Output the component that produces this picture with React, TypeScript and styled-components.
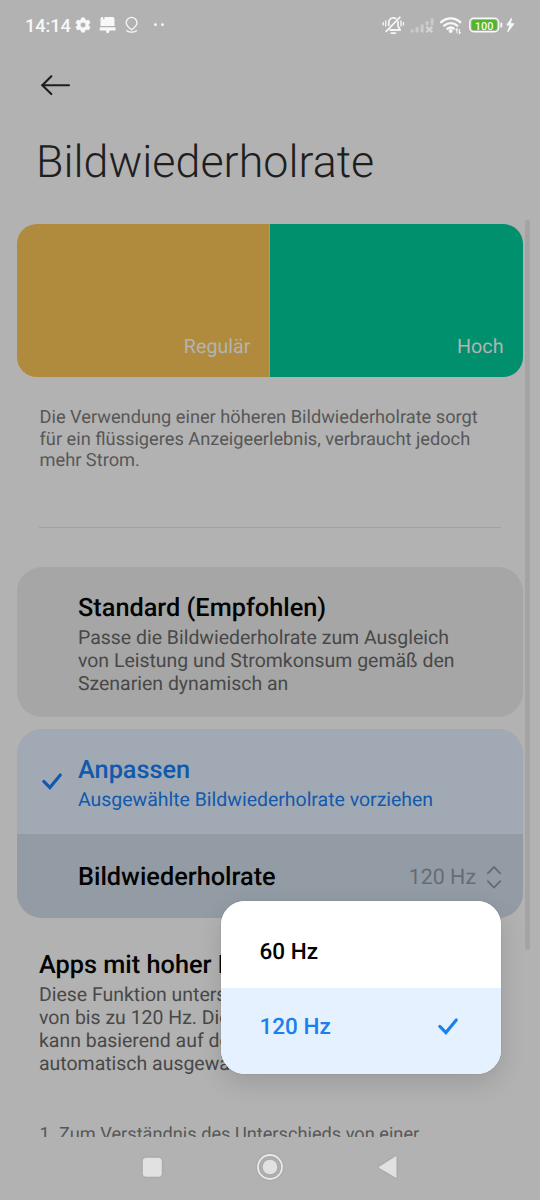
import React from "react";
import styled, { createGlobalStyle } from "styled-components";

const Global = createGlobalStyle`
  * { box-sizing: border-box; }
  body { margin: 0; background: #b2b2b2; font-family: Roboto, "Liberation Sans", sans-serif; text-rendering: geometricPrecision; }
  h1, h2, p { margin: 0; }
  svg { display: block; flex: none; }
`;

const Screen = styled.main`
  position: relative;
  width: 540px;
  height: 1200px;
  overflow: hidden;
  display: flex;
  flex-direction: column;
  background: #b2b2b2;
`;

const StatusBar = styled.header`
  height: 50px;
  padding: 0 24px 0 25px;
  display: flex;
  justify-content: space-between;
  align-items: center;
  flex: none;
`;

const Clock = styled.span`
  width: 46px;
  font-size: 18.2px;
  font-weight: 500;
  line-height: 22px;
  padding-top: 3px;
  letter-spacing: -0.1px;
  color: #f8f8f8;
  white-space: nowrap;
`;

const StatusGroup = styled.div`
  display: flex;
  align-items: center;
`;

const Toolbar = styled.div`
  height: 70px;
  padding: 25px 0 0 40px;
  flex: none;
`;

const Title = styled.h1`
  height: 104px;
  padding: 13px 0 0 36px;
  font-size: 44.8px;
  font-weight: 300;
  line-height: 58px;
  color: #1e1e1e;
  white-space: nowrap;
  flex: none;
`;

const Content = styled.section`
  height: 913px;
  overflow: hidden;
  display: flex;
  flex-direction: column;
  padding: 0 17px;
  flex: none;
`;

const Preview = styled.div`
  height: 153px;
  display: grid;
  grid-template-columns: 253px 253px;
  border-radius: 20px;
  overflow: hidden;
  flex: none;
`;

const PreviewHalf = styled.div<{ $color: string }>`
  display: flex;
  justify-content: flex-end;
  align-items: flex-end;
  padding: 0 19.5px 18.5px 0;
  font-size: 19.7px;
  line-height: 24px;
  color: #b3b3b3;
  background: ${(p) => p.$color};
  &:first-child {
    border-right: 1px solid #afa160;
    padding-right: 18.5px;
  }
`;

const Intro = styled.p`
  height: 150px;
  padding: 30.4px 0 0 22.5px;
  font-size: 18.23px;
  line-height: 21.4px;
  color: #575757;
  white-space: pre-line;
  flex: none;
`;

const Divider = styled.hr`
  width: 462px;
  height: 1px;
  margin: 0 0 39px 22px;
  border: 0;
  background: #a1a1a1;
  flex: none;
`;

const Card = styled.article<{ $height: number }>`
  height: ${(p) => p.$height}px;
  border-radius: 25px;
  background: #a6a6a6;
  overflow: hidden;
  margin-bottom: 12px;
  flex: none;
`;

const Option = styled.div<{ $active?: boolean; $height: number }>`
  display: grid;
  grid-template-columns: 61px 1fr;
  height: ${(p) => p.$height}px;
  padding-top: 27px;
  background: ${(p) => (p.$active ? "#a1aab4" : "#a6a6a6")};
  color: ${(p) => (p.$active ? "#1059ad" : "#484848")};
`;

const Mark = styled.div`
  padding: 15.5px 0 0 24px;
`;

const Heading = styled.h2<{ $color?: string }>`
  font-size: 25.3px;
  font-weight: 500;
  line-height: 30px;
  color: ${(p) => p.$color ?? "#030303"};
  white-space: nowrap;
`;

const Description = styled.p`
  font-size: 19.47px;
  line-height: 23px;
  padding-top: 2px;
  color: inherit;
  white-space: pre-line;
`;

const RateRow = styled.div`
  height: 84px;
  padding: 4px 21px 0 61px;
  display: flex;
  align-items: center;
  background: #939ca5;
`;

const RateValue = styled.span`
  margin-left: auto;
  padding-right: 10px;
  font-size: 21.4px;
  line-height: 26px;
  color: #676c72;
`;

const Apps = styled.div`
  padding: 21px 0 0 22px;
  width: 500px;
  color: #484848;
  flex: none;
`;

const Footnote = styled.p`
  padding: 48.5px 0 0 22.5px;
  font-size: 18.2px;
  line-height: 21.4px;
  color: #575757;
  white-space: nowrap;
  flex: none;
`;

const ScrollThumb = styled.div`
  position: absolute;
  left: 524.5px;
  top: 220px;
  width: 5.5px;
  height: 730px;
  border-radius: 3px;
  background: #a4a4a4;
`;

const Popup = styled.div`
  position: absolute;
  left: 220.5px;
  top: 901px;
  width: 280.5px;
  height: 173px;
  border-radius: 24px;
  overflow: hidden;
  background: #fff;
  box-shadow: 0 9px 26px rgba(0, 0, 0, 0.13), 0 0 2px rgba(0, 0, 0, 0.12);
`;

const PopupItem = styled.div<{ $selected?: boolean }>`
  height: 86.5px;
  display: flex;
  align-items: center;
  justify-content: space-between;
  padding: ${(p) => (p.$selected ? "0 42px 8px 39px" : "15px 42px 0 39px")};
  font-size: 22.5px;
  font-weight: 500;
  line-height: 28px;
  color: ${(p) => (p.$selected ? "#1a80ed" : "#000")};
  background: ${(p) => (p.$selected ? "#e5f1ff" : "#fff")};
`;

const NavBar = styled.nav`
  height: 63px;
  display: flex;
  justify-content: space-between;
  padding: 15px 140px 0 139px;
  filter: drop-shadow(0 0 1px rgba(0, 0, 0, 0.15));
`;

const Check = ({ color }: { color: string }) => (
  <svg width="22" height="20" viewBox="0 0 22 20" fill="none" stroke={color} strokeWidth="3.1">
    <path d="M2.8 9.4l6.1 6.2L19.3 3" strokeLinecap="round" strokeLinejoin="miter" />
  </svg>
);

const NotificationIcons = () => (
  <svg width="100" height="24" viewBox="71 13 100 24" fill="#f8f8f8">
    <g transform="translate(83 25)">
      <path
        fillRule="evenodd"
        d="M-1.5-7.2h3l.7 2.1 1.2.7 2.2-.5 1.5 2.6L5.6-.7v1.4l1.5 1.6-1.5 2.6-2.2-.5-1.2.7-.7 2.1h-3l-.7-2.1-1.2-.7-2.2.5-1.5-2.6L-5.6.7V-.7l-1.5-1.6 1.5-2.6 2.2.5 1.2-.7zM0-2.7a2.7 2.7 0 1 0 0 5.4 2.7 2.7 0 0 0 0-5.4z"
        stroke="#f8f8f8"
        strokeWidth=".5"
        strokeLinejoin="round"
      />
    </g>
    <path d="M102.2 17h.9v2.3h1.3V17h8.2q1.9 0 1.9 1.9v7h-14V19q0-2 1.7-2z" />
    <path d="M100.4 27.2h14.4q.8 0 .8 1.1v1.5q0 .6-.7.6h-5.3l-.6 2q-1.3 1.2-2.6 0l-.6-2h-5.4q-.7 0-.7-.6v-1.5q0-1.1.7-1.1z" />
    <g fill="none" stroke="#f8f8f8" strokeWidth="1.3" strokeLinecap="round">
      <path d="M131.6 29.8c-2.7-2-5.4-4-5.4-7a5.4 5.4 0 0 1 10.8 0c0 3-2.7 5-5.4 7z" />
      <path d="M126.8 30.7c2.5 2 7.1 2 9.6 0" />
    </g>
    <circle cx="155.5" cy="24.7" r="1.4" />
    <circle cx="162.5" cy="24.7" r="1.4" />
  </svg>
);

const SystemIcons = () => (
  <svg width="136" height="26" viewBox="380 12 136 26" fill="none">
    <g stroke="#f5f5f5" strokeWidth="1.8" strokeLinecap="round" strokeLinejoin="round">
      <path d="M388.7 25.2v-2c0-3 2-5.4 4.5-5.4 1 0 1.9.3 2.6.8M398 22v4.3l2.2 3.7h-10" />
      <path d="M386.2 31.3l13.6-14" />
      <path d="M391.4 33.2h4" />
      <path d="M385.7 21v5M383.2 22.7v2.2M401 21v5M403.4 22.7v2.2" strokeWidth="1.4" />
    </g>
    <g fill="#cbcbcb">
      <rect x="410.7" y="29.4" width="3" height="3" rx=".6" />
      <rect x="415.5" y="27" width="3" height="5.4" rx=".6" />
      <rect x="420.6" y="24.4" width="3" height="8" rx=".6" />
      <rect x="425.6" y="21.3" width="3" height="4" rx=".6" />
      <rect x="430.7" y="18.2" width="2.8" height="7" rx=".6" />
    </g>
    <path d="M426.4 26.8l6 5.4M432.4 26.8l-6 5.4" stroke="#d6d6d6" strokeWidth="2" />
    <g stroke="#f8f8f8" strokeWidth="2.4" strokeLinecap="round">
      <path d="M441.2 22.2c5.5-5.1 13.5-5.1 19 0" />
      <path d="M444.2 25.7c3.8-3.4 9.2-3.4 13 0" />
      <path d="M447.4 28.8c2-1.6 4.6-1.6 6.4-.2" />
    </g>
    <circle cx="450.7" cy="31" r="2" fill="#f8f8f8" />
    <path d="M457 33.3v-4.5l-1.3 1.5M459.4 29v4.5l1.3-1.5" stroke="#f8f8f8" strokeWidth="1.1" />
    <rect x="469.8" y="18.3" width="28.8" height="13.4" rx="3.9" stroke="#f8f8f8" strokeWidth="1.5" />
    <rect x="471.6" y="20" width="25.2" height="10" rx="2" fill="#51b529" />
    <path d="M501.3 23.5v3.2" stroke="#f8f8f8" strokeWidth="1.8" strokeLinecap="round" />
    <text x="484.2" y="29.5" textAnchor="middle" fontSize="11" fontWeight="500" fill="#f5f5f5" fontFamily="Roboto, sans-serif">
      100
    </text>
    <path d="M511.5 18.3l-4.6 6.8h3.2l-2.4 6.7 6.3-8h-3.6z" fill="#f8f8f8" stroke="#f8f8f8" strokeWidth="1" strokeLinejoin="round" />
  </svg>
);

export default function App() {
  return (
    <>
      <Global />
      <Screen>
        <StatusBar>
          <StatusGroup>
            <Clock>14:14</Clock>
            <NotificationIcons />
          </StatusGroup>
          <SystemIcons />
        </StatusBar>
        <Toolbar>
          <svg width="32" height="22" viewBox="0 0 32 22" fill="none" stroke="#1e1e1e" strokeWidth="2.1" strokeLinecap="round" strokeLinejoin="round">
            <path d="M29 10.3H2M11.3 1.3l-9 9 9 8.8" />
          </svg>
        </Toolbar>
        <Title>Bildwiederholrate</Title>
        <Content>
          <Preview>
            <PreviewHalf $color="#b18b3d">Regulär</PreviewHalf>
            <PreviewHalf $color="#00906d">Hoch</PreviewHalf>
          </Preview>
          <Intro>
            {"Die Verwendung einer höheren Bildwiederholrate sorgt\nfür ein flüssigeres Anzeigeerlebnis, verbraucht jedoch\nmehr Strom."}
          </Intro>
          <Divider />
          <Card $height={150}>
            <Option $height={150}>
              <Mark />
              <div>
                <Heading>Standard (Empfohlen)</Heading>
                <Description>
                  {"Passe die Bildwiederholrate zum Ausgleich\nvon Leistung und Stromkonsum gemäß den\nSzenarien dynamisch an"}
                </Description>
              </div>
            </Option>
          </Card>
          <Card $height={189}>
            <Option $active $height={105}>
              <Mark>
                <Check color="#1059ad" />
              </Mark>
              <div>
                <Heading $color="#1059ad">Anpassen</Heading>
                <Description>Ausgewählte Bildwiederholrate vorziehen</Description>
              </div>
            </Option>
            <RateRow>
              <Heading>Bildwiederholrate</Heading>
              <RateValue>120 Hz</RateValue>
              <svg width="16" height="24" viewBox="0 0 16 24" fill="none" stroke="#676c72" strokeWidth="1.8" strokeLinecap="round" strokeLinejoin="round">
                <path d="M1.8 7.4L8 1l6.2 6.4M1.8 15.2L8 21.6l6.2-6.4" />
              </svg>
            </RateRow>
          </Card>
          <Apps>
            <Heading>Apps mit hoher Bildwiederholrate</Heading>
            <Description>
              {"Diese Funktion unterstützt Raten\nvon bis zu 120 Hz. Die Rate\nkann basierend auf der App\nautomatisch ausgewählt werden."}
            </Description>
          </Apps>
          <Footnote>1. Zum Verständnis des Unterschieds von einer</Footnote>
        </Content>
        <NavBar>
          <svg width="26" height="30" viewBox="0 0 26 30" fill="#e1e1e1">
            <rect x="3.8" y="5.7" width="19" height="19" rx="3.5" />
          </svg>
          <svg width="30" height="30" viewBox="0 0 30 30" fill="#e1e1e1">
            <circle cx="15" cy="15" r="12" fill="none" stroke="#e9e9e9" strokeWidth="1.8" />
            <circle cx="15" cy="15" r="7.3" />
          </svg>
          <svg width="26" height="30" viewBox="0 0 26 30" fill="#e1e1e1" stroke="#e1e1e1" strokeWidth="1.4" strokeLinejoin="round">
            <path d="M21.8 5v20L5.6 15.3z" />
          </svg>
        </NavBar>
        <ScrollThumb />
        <Popup>
          <PopupItem>60 Hz</PopupItem>
          <PopupItem $selected>
            120 Hz
            <Check color="#1a80ed" />
          </PopupItem>
        </Popup>
      </Screen>
    </>
  );
}
